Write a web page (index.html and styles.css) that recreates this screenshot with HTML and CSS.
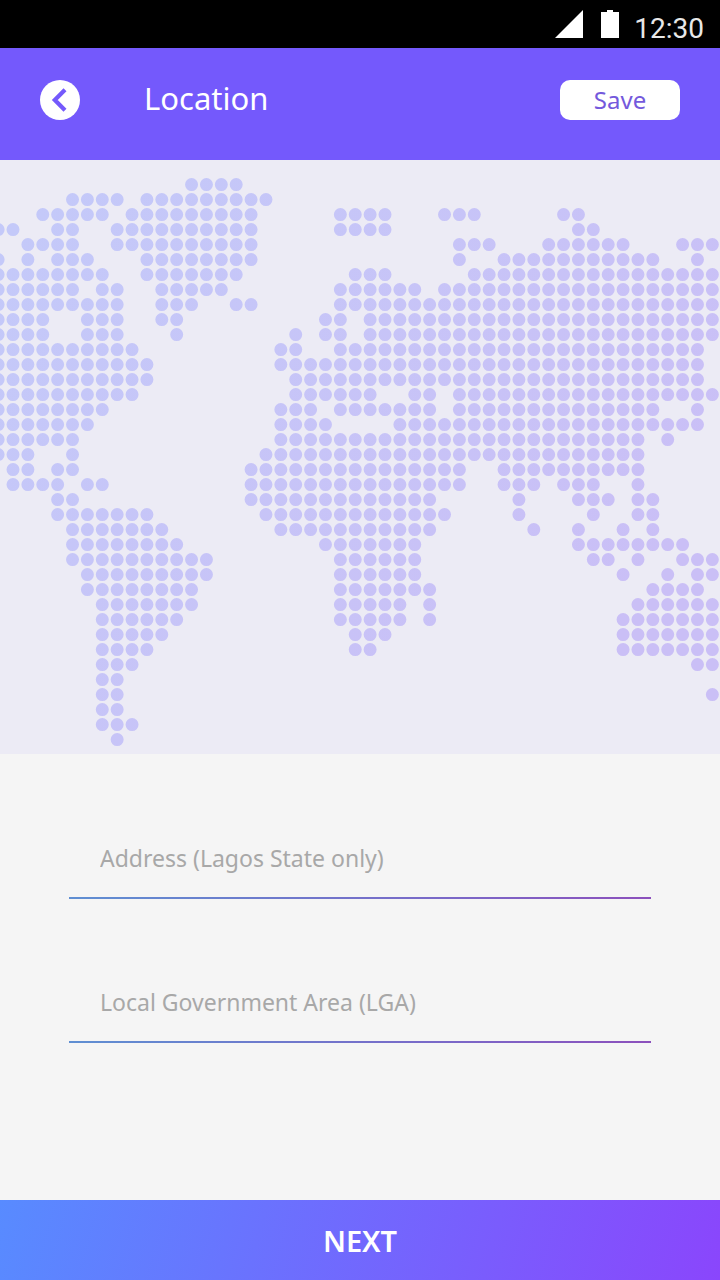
FILE: index.html
```
<!DOCTYPE html>
<html lang="en">
<head>
<meta charset="utf-8">
<meta name="viewport" content="width=device-width, initial-scale=1">
<title>Location</title>
<link rel="stylesheet" href="styles.css">
</head>
<body>
<div class="screen">
  <div class="status-bar">
    <svg class="signal" width="28" height="28" viewBox="0 0 28 28" aria-hidden="true"><path d="M28 0V28H0Z" fill="#fff"/></svg>
    <svg class="battery" width="18" height="28" viewBox="0 0 18 28" aria-hidden="true"><path d="M6 0H12V2H18V28H0V2H6Z" fill="#fff"/></svg>
    <time class="clock">12:30</time>
  </div>
  <header class="app-bar">
    <button class="back" type="button" aria-label="Back">
      <svg width="40" height="40" viewBox="0 0 40 40" aria-hidden="true"><path d="M25 9.8L14.8 20L25 30.2" fill="none" stroke="#7459fc" stroke-width="4.2"/></svg>
    </button>
    <h1 class="title">Location</h1>
    <button class="save" type="button">Save</button>
  </header>
  <svg class="map" viewBox="0 0 720 594" role="img" aria-label="World map">
    <defs>
      <linearGradient id="dots" gradientUnits="userSpaceOnUse" x1="0" y1="100" x2="600" y2="500">
        <stop offset="0" stop-color="#c4c9f9"/>
        <stop offset="1" stop-color="#cabff6"/>
      </linearGradient>
    </defs>
    <path id="land" fill="url(#dots)"/>
  </svg>
  <form class="form">
    <input class="field" type="text" aria-label="Address" placeholder="Address (Lagos State only)">
    <input class="field" type="text" aria-label="Local Government Area" placeholder="Local Government Area (LGA)">
  </form>
  <button class="next" type="button">NEXT</button>
</div>
<script src="map.js"></script>
</body>
</html>
```
FILE: styles.css
```
* {
  box-sizing: border-box;
}

body {
  margin: 0;
  background: #f5f5f5;
  font-family: "Noto Sans", sans-serif;
}

button,
input {
  border: 0;
  padding: 0;
  font-family: inherit;
}

.screen {
  display: flex;
  flex-direction: column;
  min-height: 100vh;
}

.status-bar {
  display: flex;
  align-items: center;
  justify-content: flex-end;
  height: 48px;
  padding-right: 16px;
  background: #000;
}

.battery {
  margin-left: 18px;
}

.clock {
  margin-left: 15px;
  padding-top: 10px;
  color: #e8e8e8;
  font: 400 28px/32px Roboto, sans-serif;
}

.app-bar {
  display: flex;
  align-items: center;
  height: 112px;
  padding: 0 40px 8px;
  background: #7459fc;
}

.back {
  width: 40px;
  height: 40px;
  border-radius: 50%;
  background: #fff;
}

.back svg {
  display: block;
}

.title {
  flex: 1;
  margin: 0;
  padding: 0 0 4px 64px;
  color: #fff;
  font-size: 31px;
  font-weight: 400;
  line-height: 40px;
}

.save {
  width: 120px;
  height: 40px;
  border-radius: 10px;
  background: #fff;
  color: #7459dc;
  font-size: 24px;
  line-height: 40px;
}

.map {
  display: block;
  width: 100%;
  height: auto;
  background: #ecebf5;
}

.form {
  display: flex;
  flex: 1;
  flex-direction: column;
  gap: 64px;
  padding: 65px 69px;
}

.field {
  width: 100%;
  height: 80px;
  padding: 0 31px;
  border-bottom: 2px solid;
  border-image: linear-gradient(90deg, #5f8fd2, #7a68c8 65%, #8c50bc) 1;
  background: transparent;
  color: #444;
  font-size: 23px;
  outline: 0;
}

.field::placeholder {
  color: #a8a8a8;
  opacity: 1;
}

.next {
  height: 80px;
  background: linear-gradient(105deg, #588bff, #8a46fc);
  color: #fff;
  font-size: 29px;
  font-weight: 600;
}
```
FILE: map.js
```
// Each entry is one row of dots, listed as column ranges.
const rows = [
  "13-16",
  "5-8 10-18",
  "3-7 9-17 23-26 30-32 38-39",
  "0-1 4-5 8-17 23-26 39-40",
  "2-5 8-17 31-33 37-42 46-48",
  "0 2 4-6 10-17 31 34-44 47",
  "0-7 10-16 24-26 32-48",
  "0-5 7-8 11-15 23-28 30-48",
  "0-8 11-13 16-17 23-48",
  "0-3 6-8 11-12 22-23 25-48",
  "0-3 6-8 12 20 22-23 25-48",
  "0-9 19-20 23-47",
  "0-10 19-47",
  "0-10 20-47",
  "0-9 20-25 28-29 31-48",
  "0-7 19-21 23-29 31-44 47",
  "0-6 19-22 27-47",
  "0-5 19-43 45",
  "0-2 5 18-43",
  "1-2 4-5 17-31 34-43",
  "1-4 6-7 17-31 34-36 38-40 43",
  "4-5 17-29 35 39-41 43-44",
  "4-10 18-30 35 40 43-44",
  "5-11 19-29 36 39 42 44",
  "5-12 22-28 39-46",
  "5-14 23-28 40-41 43 46-48",
  "6-14 23-28 42 45 47-48",
  "6-13 23-29 44-47",
  "7-13 23-27 29 43-48",
  "7-12 23-27 29 42-48",
  "7-11 24-26 42-48",
  "7-10 24-25 42-48",
  "7-9 47-48",
  "7-8",
  "7-8 48",
  "7-8",
  "7-9",
  "8"
];
const stepX = 14.88;
const stepY = 15;
const r = 6.5;

let d = "";
rows.forEach((row, j) => {
  const y = 24.6 + j * stepY;
  row.split(" ").forEach((range) => {
    const [from, to = from] = range.split("-").map(Number);
    for (let k = from; k <= to; k++) {
      const x = 13 + (k - 1) * stepX;
      d += `M${x - r} ${y}a${r} ${r} 0 1 0 ${2 * r} 0a${r} ${r} 0 1 0 ${-2 * r} 0`;
    }
  });
});
document.getElementById("land").setAttribute("d", d);
```
